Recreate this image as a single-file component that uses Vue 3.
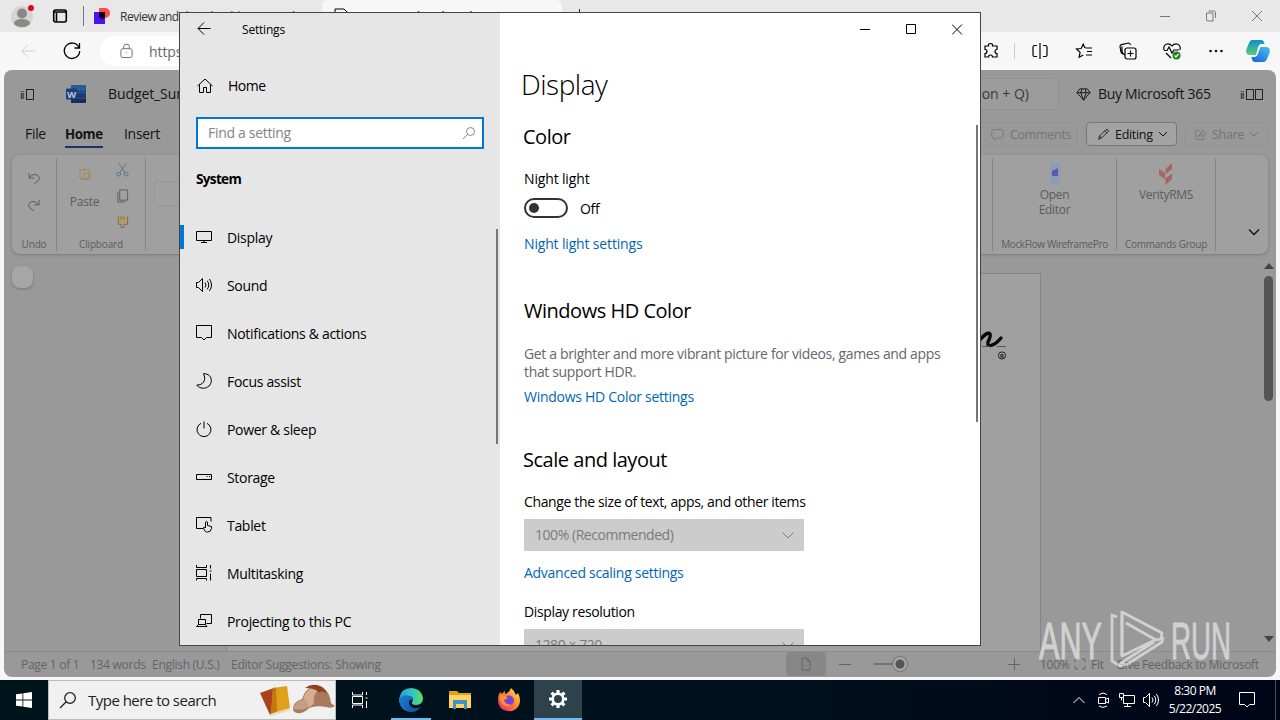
<script setup>
  import { ref } from "vue"

  const search = ref("")
  const nightLight = ref(false)
  const selected = ref("Display")

  const navItems = [
    { name: "Display", icon: "M.5 2.5h15v9H.5zM8 11.5v2M5 13.5h6" },
    {
      name: "Sound",
      icon: "M.5 5.5h2l4-4v13l-4-4h-2zM9 5.5q2 2.5 0 5M11.2 3.7q3.2 4.3 0 8.6M13.4 2q4.3 6 0 12"
    },
    { name: "Notifications & actions", icon: "M.5 .5h15v12h-5l-2.500 2.500-2.500-2.500h-5z" },
    {
      name: "Focus assist",
      icon: "M7.5.7c5-.2 8 3 7.8 7.2-.2 4-3.500 7.300-8 7.300-3 0-5.300-1.200-6.500-3.200 6 .5 10-5 6.700-11.300z"
    },
    { name: "Power & sleep", icon: "M8 .5v7M5 2.300a7 7 0 1 0 6 0" },
    { name: "Storage", icon: "M.5 5.500h15v5h-15zM10.500 7.500h1M13 7.500h1" },
    {
      name: "Tablet",
      icon: "M7 11.500H.5v-11h14.500v4M9.500 11V5q1-1.500 2 0v3.500l4 1v2q-.5 3.500-4 3.500h-1q-2.500-.5-3-4.500 1.500-1 2 .5"
    },
    {
      name: "Multitasking",
      icon: "M.5 0v2.500h10V0M.5 4.500h10v7H.5zM.5 15.500v-2h10v2M14.500 0v3.500M14.500 8.500v7M13.500 6h2"
    },
    { name: "Projecting to this PC", icon: "M4.500 5.500v-4h11v9h-5M2.500 6.500h7v5h-7zM.5 13.500l2-2h7l1.500 2z" }
  ]
</script>

<template>
  <div class="desktop">
    <!-- browser -->
    <div class="browser">
      <div class="tab-strip">
        <svg class="avatar" viewBox="0 0 26 26">
          <circle cx="12" cy="14" r="11" fill="#d6d4d2" />
          <circle cx="12" cy="10.500" r="5" fill="#8b8885" />
          <ellipse cx="12" cy="20" rx="8" ry="4" fill="#8b8885" />
          <circle cx="21" cy="5" r="3" fill="#d90b1c" />
        </svg>
        <svg class="workspaces" viewBox="0 0 16 16">
          <rect x="1.700" y="2" width="12.600" height="12" rx="2" />
          <path d="M2 4h12M4.500 5v9" />
        </svg>
        <span class="strip-line"></span>
        <svg class="favicon" viewBox="0 0 16 16">
          <path d="M5 0h6a5 5 0 0 1 0 10H5z" fill="#ff4b55" />
          <path d="M0 4h11v12H0z" fill="#4b12f5" />
          <path d="M5 4h6v5q-1 2-4 1.500l-2-2z" fill="#090014" />
        </svg>
        <span class="tab-title first">Review and download | MySigned</span>
        <div class="active-tab">
          <svg viewBox="0 0 16 16"><path d="M2 1h9l3 3v11H2z" /></svg>
          <span>Support Ticket Shared - M</span>
        </div>
        <span class="plus-mark"></span>
        <div class="browser-controls">
          <svg viewBox="0 0 12 12"><path d="M1 6.500h10" /></svg>
          <svg viewBox="0 0 12 12">
            <path d="M3.500 1h5q2 0 2 2v5M1.500 3h6.500v8H3q-1.500 0-1.500-1.500z" />
          </svg>
          <svg viewBox="0 0 12 12"><path d="M1 1l10 10M11 1L1 11" /></svg>
        </div>
      </div>
      <div class="address-row">
        <svg class="back" viewBox="0 0 18 18"><path d="M17 9H2M9 2L2 9l7 7" /></svg>
        <svg class="reload" viewBox="0 0 18 18">
          <path d="M16 5.500A7.700 7.700 0 1 0 16.700 9M16.500 1v5h-5" />
        </svg>
        <div class="address">
          <svg viewBox="0 0 14 16">
            <rect x="1" y="5.500" width="12" height="9.500" rx="2" />
            <path d="M4 5V3q0-2.300 3-2.300T10 3v2M6.500 10h1" />
          </svg>
          <span>https://onedrive.live.com</span>
        </div>
        <div class="tools">
          <svg viewBox="0 0 18 18">
            <path d="M2 4h3.500Q5 1.500 7.500 1.500T9.500 4H14v3.500q-2 0-2 2t2 2V15H9.500q0-2-2-2t-2 2H2v-3.500q2 0 2-2t-2-2z" transform="translate(1 0)" />
          </svg>
          <i></i>
          <svg viewBox="0 0 18 18">
            <path d="M6 3.500H3.500q-1.500 0-1.500 1.500v8q0 1.500 1.500 1.500H6M9 1v16M12 3.500h2.500Q16 3.500 16 5v8q0 1.500-1.500 1.500H12" />
          </svg>
          <svg viewBox="0 0 18 18">
            <path d="M10.500 6H17M12 9.500h5M11 13h6M10 6L8.200 2.200 6.200 6.500 1.500 7l3.600 3.400-1 4.800L8.300 13" />
          </svg>
          <svg viewBox="0 0 18 18">
            <rect x="6" y="6" width="11" height="11" rx="2" />
            <path d="M11.500 8.500v6M8.500 11.500h6M4 12q-1.500-.5-2-2L1 4.500Q1 3 2.500 2.700L9.500 1q1.700 0 2 2M3 4.500V9q0 3 3 4" />
          </svg>
          <svg viewBox="0 0 18 18">
            <path d="M1 8Q0 3 4 2q3-.5 5 2 2-2.500 5-2 4 1 3 6M1 8.500h3l2-3.500 3 6 2-3h5M3 11l5 5" />
            <circle cx="13.500" cy="13.500" r="4" fill="#1b841b" />
            <path d="M11.500 13.500l1.500 1.500 2.500-3" stroke="#fff" />
          </svg>
          <svg class="dots" viewBox="0 0 18 18">
            <circle cx="3.500" cy="9" r="1.300" />
            <circle cx="9" cy="9" r="1.300" />
            <circle cx="14.500" cy="9" r="1.300" />
          </svg>
          <svg class="copilot" viewBox="0 0 26 26">
            <defs>
              <linearGradient id="copilotLeft" x1="0" y1="0" x2="0" y2="1">
                <stop offset="0" stop-color="#1489d8" />
                <stop offset="1" stop-color="#5bd06b" />
              </linearGradient>
              <linearGradient id="copilotRight" x1="1" y1="0" x2="0" y2="1">
                <stop offset="0" stop-color="#43c6ed" />
                <stop offset="1" stop-color="#165ce8" />
              </linearGradient>
            </defs>
            <path d="M7 2h9q3 0 3.500 4h-3q-2.500 0-3.300 3L11 17H4q-4-1-2.500-6L4 5q1-3 3-3z" fill="url(#copilotLeft)" />
            <path d="M19 24h-9q-3 0-3.500-5h3q2.500 0 3.300-3L15.500 9H22q4 1 2.500 6L22 21q-1 3-3 3z" fill="url(#copilotRight)" />
          </svg>
        </div>
      </div>

      <!-- Word online, dimmed -->
      <div class="word">
        <div class="word-header">
          <span class="glyphs left">ii<b></b></span>
          <svg class="word-logo" viewBox="0 0 20 18">
            <path d="M5 0h14q1 0 1 1v3.500H5z" fill="#285b91" />
            <path d="M5 4.500h15V9H5z" fill="#1e4b87" />
            <path d="M5 9h15v4.500H5z" fill="#183b73" />
            <path d="M5 13.500h15V17q0 1-1 1H5z" fill="#132d5d" />
            <rect y="3.500" width="11" height="11" rx="1" fill="#183f80" />
            <text x="1" y="12.500" font-size="9.500" font-weight="700" fill="#bcc5d2">W</text>
          </svg>
          <span class="doc-name">Budget_Summary</span>
          <div class="word-search">Search (Option + Q)</div>
          <svg class="gem" viewBox="0 0 16 16">
            <path d="M4 2h8l3 4-7 8-7-8zM1 6h14M5 6l3 8 3-8-1.500-4M5 6l1.500-4" />
          </svg>
          <span class="buy">Buy Microsoft 365</span>
          <span class="glyphs">ii<b></b><b></b></span>
        </div>
        <div class="word-tabs">
          <span class="file">File</span>
          <span class="home">Home</span>
          <span>Insert</span>
          <div class="word-actions">
            <span class="faint comments">
              <svg viewBox="0 0 16 16"><path d="M3 2h10q2 0 2 2v6q0 2-2 2H8l-4 3v-3H3q-2 0-2-2V4q0-2 2-2z" /></svg>
              Comments
            </span>
            <span class="editing">
              <svg viewBox="0 0 16 16"><path d="M2 14l1-4 8-8q3-1 3 2l-8 8zM9.500 3.500l3 3M3 10l3 2" /></svg>
              Editing
              <svg class="chev" viewBox="0 0 10 10"><path d="M1 3l4 4 4-4" /></svg>
            </span>
            <span class="faint share">
              <svg viewBox="0 0 16 16"><path d="M7 3H4Q2 3 2 5v7q0 2 2 2h7q2 0 2-2M5 11q1-5 5-5V3l5 4-5 4V8q-3 0-5 3z" /></svg>
              Share
              <svg class="chev" viewBox="0 0 10 10"><path d="M1 3l4 4 4-4" /></svg>
            </span>
          </div>
        </div>
        <div class="ribbon">
          <div class="group undo">
            <svg viewBox="0 0 14 14"><path d="M2 2v5h5M2 7q4-5 8-3t1 6l-4 3" /></svg>
            <svg viewBox="0 0 14 14"><path d="M12 2v5H7M12 7Q8 2 4 4t-1 6l4 3" /></svg>
            <label>Undo</label>
          </div>
          <div class="group clipboard">
            <div class="clip-body">
              <div class="paste">
                <svg viewBox="0 0 12 14"><path d="M1 2h9v9H1zM4 1h3M5 5h6v6H5z" stroke="#a78650" /></svg>
                <span>Paste</span>
              </div>
              <div class="clip-icons">
                <svg viewBox="0 0 14 16">
                  <path d="M3 1l7 10M11 1L4 11" stroke="#686868" />
                  <circle cx="3" cy="12.500" r="2" stroke="#52718b" />
                  <circle cx="11" cy="12.500" r="2" stroke="#52718b" />
                </svg>
                <svg viewBox="0 0 14 16"><path d="M4 1.500h8.500v11H4zM2 4v10.500h8" /></svg>
                <svg viewBox="0 0 14 16">
                  <path d="M2.500 2h10v7h-10z" fill="#b89a68" />
                  <path d="M2.500 2v8.500h3V14h3v-3.500h4V2M5.500 2v3M8.500 2v3" stroke="#7d6848" />
                </svg>
              </div>
            </div>
            <label>Clipboard</label>
          </div>
          <div class="font-box"></div>
          <div class="group mock">
            <svg class="mock-icon" viewBox="0 0 12 22">
              <rect x="1" width="10" height="22" rx="2" fill="#8c9bbb" />
              <path d="M3 8l6-3v8H3z" fill="#545fa1" />
            </svg>
            <p>Open<br />Editor</p>
            <label>MockFlow WireframePro</label>
          </div>
          <div class="group verity">
            <svg class="verity-icon" viewBox="0 0 14 22">
              <path d="M0 6l6 4v6l-6-4zM6.500 6L13 0v6l-6.500 5zM6.500 15L13 11v5l-6.500 6z" fill="#a66561" />
            </svg>
            <p>VerityRMS</p>
            <label>Commands Group</label>
          </div>
          <svg class="expand" viewBox="0 0 12 12"><path d="M1 3.500l5 5 5-5" /></svg>
        </div>
        <div class="document">
          <div class="bubble"></div>
          <div class="paper">
            <svg viewBox="0 0 60 40">
              <path class="ink" d="M-4 11Q5 0 8 3q1 2-2 8-1 5 4 3 4-1 9-7" />
              <path d="M0 15.500h8M15 15.500h9" stroke="#555" />
              <circle cx="20" cy="24.500" r="3.600" stroke="#222" fill="none" />
              <text x="18" y="26.800" font-size="6" font-weight="700">R</text>
            </svg>
          </div>
          <div class="scrollbar">
            <svg viewBox="0 0 10 8"><path d="M0 7l5-6 5 6z" /></svg>
            <i></i>
            <svg class="down" viewBox="0 0 10 8"><path d="M0 1l5 6 5-6z" /></svg>
          </div>
        </div>
        <div class="status">
          <span class="page-no">Page 1 of 1</span>
          <span class="words">134 words</span>
          <span class="lang">English (U.S.)</span>
          <span class="editor">Editor Suggestions: Showing</span>
          <span class="view"><svg viewBox="0 0 12 14"><path d="M2 1h5l3 3v9H2zM7 1v3h3" /></svg></span>
          <svg class="minus" viewBox="0 0 12 12"><path d="M0 6.500h12" /></svg>
          <svg class="slider" viewBox="0 0 36 16">
            <path d="M0 8h18" stroke-width="1.500" />
            <circle cx="26" cy="8" r="8" fill="#777777" />
            <circle cx="26" cy="8" r="7" fill="#a6a6a6" />
            <circle cx="26" cy="8" r="4.500" fill="#555555" />
          </svg>
          <svg class="plus" viewBox="0 0 12 12"><path d="M0 6.500h12M6.500 0v12" /></svg>
          <span class="percent">100%</span>
          <svg class="fit" viewBox="0 0 12 12"><path d="M1 4V1h3M8 1h3v3M11 8v3H8M4 11H1V8" /></svg>
          <span class="fit-text">Fit</span>
          <span class="feedback">Give Feedback to Microsoft</span>
        </div>
      </div>
    </div>

    <!-- watermark -->
    <svg class="watermark" viewBox="0 0 200 64">
      <text x="3" y="53" textLength="63" lengthAdjust="spacingAndGlyphs">ANY</text>
      <text x="135" y="53" textLength="60" lengthAdjust="spacingAndGlyphs">RUN</text>
      <path d="M81 11l-5-2v46l8 5 5-2M86 50V6l40 21-1 6-5 1-30-17" />
      <path d="M86 6v44l35-17M90 59l36-23 1-5M90 59l-5-2 33-21" />
    </svg>

    <!-- settings window -->
    <div class="settings">
      <aside>
        <div class="title-row">
          <svg viewBox="0 0 14 14"><path d="M13.500 6.500H1M7 .5l-6 6 6 6" /></svg>
          <span>Settings</span>
        </div>
        <div class="nav-home">
          <svg viewBox="0 0 16 16"><path d="M.5 8L8 1l7.500 7M2.500 6.500v8h4v-5h3v5h4v-8" /></svg>
          <span>Home</span>
        </div>
        <div class="find">
          <input v-model="search" placeholder="Find a setting" />
          <svg viewBox="0 0 14 14"><circle cx="8.500" cy="5.500" r="4" /><path d="M5.500 8.500L1 13" /></svg>
        </div>
        <h3>System</h3>
        <nav>
          <div
            v-for="item in navItems"
            :key="item.name"
            class="nav-item"
            :class="{ active: selected === item.name }"
            @click="selected = item.name"
          >
            <svg viewBox="0 0 16 16"><path :d="item.icon" /></svg>
            <span>{{ item.name }}</span>
          </div>
        </nav>
        <div class="nav-thumb"></div>
      </aside>
      <main>
        <div class="window-controls">
          <svg viewBox="0 0 11 11"><path d="M0 5.500h10" /></svg>
          <svg viewBox="0 0 11 11"><path d="M.5.5h9v9H.5z" /></svg>
          <svg viewBox="0 0 11 11"><path d="M0 .5l10 10M10 .5l-10 10" /></svg>
        </div>
        <h1>Display</h1>
        <h2>Color</h2>
        <p class="label">Night light</p>
        <div class="toggle-row">
          <button class="toggle" :class="{ on: nightLight }" @click="nightLight = !nightLight"><i></i></button>
          <span>{{ nightLight ? "On" : "Off" }}</span>
        </div>
        <a class="night-link">Night light settings</a>
        <h2 class="hd">Windows HD Color</h2>
        <p class="hint">Get a brighter and more vibrant picture for videos, games and apps<br />that support HDR.</p>
        <a class="hd-link">Windows HD Color settings</a>
        <h2 class="scale">Scale and layout</h2>
        <p class="label size-label">Change the size of text, apps, and other items</p>
        <div class="select">
          <span>100% (Recommended)</span>
          <svg viewBox="0 0 12 12"><path d="M.5 3.500L6 9l5.500-5.500" /></svg>
        </div>
        <a class="adv-link">Advanced scaling settings</a>
        <p class="label res-label">Display resolution</p>
        <div class="select">
          <span>1280 × 720</span>
          <svg viewBox="0 0 12 12"><path d="M.5 3.500L6 9l5.500-5.500" /></svg>
        </div>
        <div class="main-thumb"></div>
      </main>
    </div>

    <!-- taskbar -->
    <div class="taskbar">
      <div class="start">
        <svg viewBox="0 0 16 16"><path d="M0 2.300l6.500-.9v6.200H0zM7.300 1.300L16 0v7.600H7.300zM0 8.400h6.500v6.200L0 13.700zM7.300 8.400H16V16l-8.700-1.300z" /></svg>
      </div>
      <div class="task-search">
        <svg class="glass" viewBox="0 0 18 18"><circle cx="11" cy="7" r="5.300" /><path d="M7.200 10.800L1 17" /></svg>
        <span>Type here to search</span>
        <svg class="art" viewBox="0 0 76 34">
          <path d="M1 10l14-5 7 21-11 6z" fill="#a8431c" />
          <path d="M14 5l14-2 3 22-19 6z" fill="#e0a01c" />
          <path d="M14 5l3-.5 1 24-6 2.500z" fill="#c67711" />
          <path d="M11 31l20-6v2.500L12 33z" fill="#ead8b4" />
          <path d="M34 26q0-7 9-10 3-9 9-12 5-3 11 0 8 5 9 16l4 3q-3 3-9 1-12-2-18 2-5 5-11 4-4-1-4-4z" fill="#a87a5e" />
          <path d="M44 16q3-9 10-12l5 4q-5 2-4 12l-5 5q-2-7-6-9z" fill="#d5ad90" />
          <path d="M46 5q8-6 17-1 3 2 5 7-5-5-8-1-3-5-14-5z" fill="#8b421f" />
          <path d="M34 26q2-7 9-9 7 0 7 7-6 4-16 2z" fill="#c89e82" />
        </svg>
      </div>
      <div class="task">
        <svg class="tview" viewBox="0 0 18 18"><path d="M1.500 1v3h10V1M1.500 5.500h10v7h-10zM1.500 17v-3h10v3M15.500 1v3M15.500 10v7M14.500 7h2" /></svg>
      </div>
      <div class="task running">
        <svg class="edge" viewBox="0 0 24 24">
          <defs>
            <linearGradient id="edgeTop" x1="0" y1="0" x2="1" y2="0">
              <stop offset="0" stop-color="#289fe0" />
              <stop offset=".6" stop-color="#32c9b7" />
              <stop offset="1" stop-color="#66dd61" />
            </linearGradient>
            <linearGradient id="edgeLow" x1="0" y1="0" x2="1" y2="1">
              <stop offset="0" stop-color="#1580d2" />
              <stop offset="1" stop-color="#134e9c" />
            </linearGradient>
          </defs>
          <path d="M0 11Q2 0 12 0q10 0 12 10 0 7-7 7-5 0-4-3Q16 9 10 8 4 7 0 14z" fill="url(#edgeTop)" />
          <path d="M0 12Q3 6 9 7.500q5 1 5 4.500-4-1-4 3 1 6 8 5 3 0 4-2-3 6-10 6Q2 23 0 12z" fill="url(#edgeLow)" />
          <path d="M8 8q-4 2-3.500 8T13 24Q2 24 0 13q2-5 8-5z" fill="#1b74cb" />
        </svg>
      </div>
      <div class="task">
        <svg class="folder" viewBox="0 0 22 20">
          <path d="M0 1h8l2 2h12v4H0z" fill="#dfa01e" />
          <path d="M0 5h22v13H0z" fill="#ffd45f" />
          <path d="M4 10h14v9h-3v-5H7v5H4z" fill="#3d92cf" />
        </svg>
      </div>
      <div class="task">
        <svg class="fox" viewBox="0 0 24 24">
          <defs>
            <linearGradient id="foxBody" x1="1" y1="0" x2="0" y2="1">
              <stop offset="0" stop-color="#fff25a" />
              <stop offset=".45" stop-color="#ff8b25" />
              <stop offset="1" stop-color="#ef197b" />
            </linearGradient>
          </defs>
          <path d="M3 4l2 2q1-2 3-3v3q4-1 6-6 4 3 5 7l2-2q4 8 0 14-4 5-10 4Q1 22 1 12q0-5 2-8z" fill="url(#foxBody)" />
          <circle cx="12" cy="12.500" r="5" fill="#7a3fd8" />
          <path d="M3 7q5 0 8 3l-4 2q1 5 7 4-4 5-9 0-3-4-2-9z" fill="#ff9233" />
        </svg>
      </div>
      <div class="task current">
        <svg class="gear" viewBox="0 0 20 20">
          <circle cx="10" cy="10" r="5.300" stroke-width="2.600" />
          <path d="M10 1v3M10 16v3M1 10h3M16 10h3M3.600 3.600l2.200 2.200M14.200 14.200l2.200 2.200M16.400 3.600l-2.200 2.200M5.800 14.200l-2.200 2.200" stroke-width="3.200" />
        </svg>
      </div>
      <div class="tray">
        <svg viewBox="0 0 16 16"><path d="M2.500 11L8 5.500l5.500 5.500" /></svg>
        <svg viewBox="0 0 16 16"><path d="M3.500 5.500h7v6h-7zM10.500 7.500l3-1.500v5l-3-1.500M4 2.500Q8-.5 12 2.500M4 14q4 3 8 0" /></svg>
        <svg viewBox="0 0 16 16"><path d="M5 3.500h10.500v8H4.500V6M.5 1.500h4v4h-4zM2.500 5.500v3M8.500 11.500v3M5 14.500h7" /></svg>
        <svg viewBox="0 0 16 16"><path :d="navItems[1].icon" /></svg>
      </div>
      <div class="clock"><span>8:30 PM</span><span>5/22/2025</span></div>
      <svg class="notice" viewBox="0 0 16 16"><path :d="navItems[2].icon" /></svg>
      <i class="peek"></i>
    </div>
  </div>
</template>

<style>
  body {
    margin: 0;
    overflow: hidden;
  }
</style>

<style scoped>
  .desktop {
    position: relative;
    width: 1280px;
    height: 720px;
    overflow: hidden;
    font-family: "Open Sans", "Noto Sans", sans-serif;
    font-size: 14px;
    letter-spacing: -0.31px;
    color: #000;
  }

  * {
    box-sizing: border-box;
  }

  svg {
    display: block;
    flex: none;
    fill: none;
    stroke: currentColor;
  }

  svg text {
    stroke: none;
    fill: currentColor;
  }

  .word-logo text {
    fill: #bcc5d2;
  }

  svg [fill^="#"],
  svg [fill^="url"] {
    stroke: none;
  }

  h1,
  h2,
  h3,
  p {
    margin: 0;
    font-weight: 400;
  }

  /* browser */
  .browser {
    height: 680px;
    display: flex;
    flex-direction: column;
    background: #f7f7f7;
  }

  .tab-strip {
    height: 32px;
    flex: none;
    display: flex;
    align-items: center;
    background: #e8e8e8;
    font-size: 12px;
    letter-spacing: -0.5px;
  }

  .avatar {
    width: 26px;
    height: 26px;
    margin-left: 10px;
  }

  .workspaces {
    width: 16px;
    height: 16px;
    margin-left: 16px;
    stroke-width: 1.6;
  }

  .strip-line {
    width: 1px;
    height: 20px;
    margin-left: 15px;
    background: #777;
  }

  .favicon {
    width: 16px;
    height: 16px;
    margin-left: 10px;
  }

  .tab-title.first {
    width: 202px;
    margin-left: 10px;
    white-space: nowrap;
    color: #333;
  }

  .active-tab {
    width: 240px;
    height: 32px;
    display: flex;
    align-items: center;
    gap: 10px;
    padding-left: 11px;
    background: #f7f7f7;
    border-radius: 6px 6px 0 0;
  }

  .active-tab svg {
    width: 16px;
    height: 16px;
  }

  .plus-mark {
    width: 1px;
    height: 14px;
    margin-left: 17px;
    background: #222;
  }

  .browser-controls {
    display: flex;
    gap: 34px;
    margin-left: auto;
    padding-right: 17px;
    color: #777;
  }

  .browser-controls svg {
    width: 12px;
    height: 12px;
  }

  .address-row {
    height: 38px;
    flex: none;
    display: flex;
    align-items: center;
  }

  .back {
    width: 18px;
    height: 16px;
    margin-left: 19px;
    color: #ccc;
  }

  .reload {
    width: 18px;
    height: 18px;
    margin-left: 26px;
    stroke-width: 1.3;
  }

  .address {
    width: 860px;
    height: 30px;
    display: flex;
    align-items: center;
    gap: 16px;
    margin-left: 19px;
    padding-left: 20px;
    border-radius: 15px;
    background: #fff;
    color: #666;
    letter-spacing: -0.1px;
  }

  .address svg {
    width: 13px;
    height: 16px;
  }

  .tools {
    display: flex;
    align-items: center;
    margin-left: 22px;
  }

  .tools svg {
    width: 18px;
    height: 18px;
    margin-right: 26px;
    stroke-width: 1.2;
  }

  .tools svg:first-child {
    margin-right: 14px;
  }

  .tools i {
    width: 1px;
    height: 16px;
    margin-right: 16px;
    background: #ccc;
  }

  .tools .dots {
    margin-right: 20px;
    fill: #111;
    stroke: none;
  }

  .tools .copilot {
    width: 26px;
    height: 26px;
    margin: 0;
  }

  /* word */
  .word {
    width: 1272px;
    height: 607px;
    display: flex;
    flex-direction: column;
    margin-left: 4px;
    overflow: hidden;
    border-radius: 8px;
    background: #999;
    color: #141414;
  }

  .word-header {
    height: 48px;
    flex: none;
    display: flex;
    align-items: center;
  }

  .glyphs {
    display: flex;
    align-items: center;
    gap: 1px;
    font-size: 11px;
    letter-spacing: -1px;
    margin-left: 29px;
  }

  .glyphs.left {
    width: 14px;
    margin-left: 16px;
  }

  .glyphs b {
    width: 8px;
    height: 11px;
    flex: none;
    border: 1px solid #222;
  }

  .glyphs b:first-of-type {
    margin-left: 1px;
  }

  .word-logo {
    width: 20px;
    height: 18px;
    margin-left: 32px;
  }

  .doc-name {
    width: 126px;
    margin-left: 22px;
    padding-bottom: 1px;
    letter-spacing: -0.1px;
  }

  .word-search {
    width: 823px;
    height: 32px;
    padding: 5px 29px;
    margin-left: 2px;
    border: 1px solid #919191;
    border-radius: 4px;
    background: #9c9c9c;
    color: #3a3a3a;
    text-align: right;
    letter-spacing: 0;
  }

  .gem {
    width: 15px;
    height: 15px;
    margin-left: 17px;
  }

  .buy {
    width: 113px;
    margin-left: 7px;
    padding-bottom: 1px;
    letter-spacing: -0.3px;
    white-space: nowrap;
  }

  .word-tabs {
    height: 37px;
    flex: none;
    display: flex;
    align-items: flex-start;
    padding: 0 8px 0 21px;
  }

  .word-tabs > span {
    height: 30px;
    line-height: 32px;
  }

  .word-tabs .file {
    width: 21px;
    margin-right: 19px;
  }

  .word-tabs .home {
    width: 38px;
    margin-right: 21px;
    font-weight: 700;
    font-size: 13.3px;
    letter-spacing: -0.4px;
    border-bottom: 2px solid #18356b;
  }

  .word-actions {
    display: flex;
    gap: 8px;
    margin: 4px 0 0 auto;
    font-size: 12.5px;
    letter-spacing: -0.3px;
  }

  .word-actions span {
    height: 24px;
    display: flex;
    align-items: center;
    gap: 6px;
    border: 1px solid #8f8f8f;
    border-radius: 4px;
  }

  .word-actions .faint {
    color: #747474;
    border-color: #929292;
  }

  .word-actions .comments {
    width: 100px;
    padding-left: 12px;
  }

  .word-actions .editing {
    width: 91px;
    gap: 5px;
    padding-left: 10px;
    border-color: #777;
    background: #a3a3a3;
    color: #111;
  }

  .word-actions .share {
    width: 83px;
    gap: 5px;
    padding-left: 8px;
  }

  .word-actions svg {
    width: 13px;
    height: 13px;
  }

  .word-actions .chev {
    width: 10px;
    height: 10px;
  }

  .ribbon {
    height: 99px;
    flex: none;
    display: flex;
    margin: 0 8px;
    border-radius: 8px;
    background: #a0a0a0;
    box-shadow: 0 1px 3px #777;
    color: #5c5c5c;
  }

  .group {
    height: 93px;
    display: flex;
    flex-direction: column;
    align-items: center;
    margin-top: 3px;
    border-right: 1px solid #858585;
  }

  .group label {
    margin: auto 0 1px;
    font-size: 10px;
    line-height: 12px;
    letter-spacing: -0.38px;
    white-space: nowrap;
  }

  .undo {
    width: 45px;
  }

  .undo label,
  .clipboard label {
    letter-spacing: -0.15px;
  }

  .verity label {
    letter-spacing: -0.26px;
  }

  .undo svg {
    width: 14px;
    height: 14px;
    margin-top: 13px;
  }

  .clipboard {
    width: 89px;
  }

  .clip-body {
    display: flex;
    gap: 17px;
    margin-left: -3px;
  }

  .paste {
    display: flex;
    flex-direction: column;
    align-items: center;
    gap: 11px;
    padding-top: 10px;
    font-size: 12px;
    letter-spacing: -0.2px;
  }

  .paste svg {
    width: 12px;
    height: 14px;
  }

  .clip-icons {
    display: flex;
    flex-direction: column;
    gap: 10px;
    padding-top: 4px;
  }

  .clip-icons svg {
    width: 13px;
    height: 16px;
  }

  .font-box {
    width: 30px;
    height: 25px;
    margin: 26px 808px 0 8px;
    border: 1px solid #979797;
    border-radius: 4px;
  }

  .group p {
    font-size: 12px;
    line-height: 15px;
    letter-spacing: -0.3px;
    text-align: center;
  }

  .mock {
    width: 125px;
    border-left: 1px solid #858585;
  }

  .verity {
    width: 99px;
  }

  .mock-icon,
  .verity-icon {
    width: 12px;
    height: 22px;
    margin: 5px 0 2px;
  }

  .verity-icon {
    width: 14px;
  }

  .expand {
    width: 12px;
    height: 12px;
    margin: 71px 0 0 32px;
    color: #111;
    stroke-width: 1.3;
  }

  .document {
    flex: 1;
    display: flex;
    min-height: 0;
  }

  .bubble {
    width: 21px;
    height: 22px;
    margin: 12px 0 0 8px;
    border-radius: 8px;
    background: #a6a6a6;
    box-shadow: 0 1px 3px #777;
  }

  .paper {
    width: 815px;
    margin: 19px auto 0 193px;
    padding: 57px 0 0 755px;
    border: 1px solid #858585;
    border-bottom: 0;
    background: #a0a0a0;
    color: #111;
  }

  .paper svg {
    width: 60px;
    height: 40px;
    overflow: visible;
  }

  .ink {
    stroke: #080808;
    stroke-width: 3.4;
    stroke-linecap: round;
  }

  .scrollbar {
    width: 10px;
    display: flex;
    flex-direction: column;
    margin-right: 2px;
    padding: 8px 0;
  }

  .scrollbar svg {
    width: 10px;
    height: 8px;
    fill: #444;
    stroke: none;
  }

  .scrollbar i {
    width: 9px;
    height: 125px;
    margin-top: 6px;
    border-radius: 5px;
    background: #555;
  }

  .scrollbar .down {
    margin-top: auto;
  }

  .status {
    height: 26px;
    flex: none;
    display: flex;
    align-items: center;
    padding-bottom: 1px;
    border-top: 1px solid #8b8b8b;
    font-size: 12px;
    letter-spacing: -0.28px;
    color: #646464;
    white-space: nowrap;
  }

  .status .page-no {
    width: 69px;
    margin-left: 17px;
  }

  .status .words {
    width: 62px;
  }

  .status .lang {
    width: 79px;
  }

  .status .editor {
    width: 555px;
  }

  .status .view {
    width: 40px;
    height: 24px;
    display: flex;
    align-items: center;
    justify-content: center;
    border-radius: 4px;
    background: #878787;
  }

  .status .view svg {
    width: 12px;
    height: 14px;
  }

  .status .minus,
  .status .plus,
  .status .fit {
    width: 12px;
    height: 12px;
  }

  .status .minus {
    margin-left: 13px;
  }

  .status .slider {
    width: 36px;
    height: 16px;
    margin-left: 23px;
    overflow: visible;
  }

  .status .plus {
    margin-left: 98px;
  }

  .status .percent {
    width: 34px;
    margin-left: 20px;
  }

  .status .fit-text {
    width: 20px;
    margin-left: 5px;
  }

  .status .feedback {
    margin-left: 5px;
    letter-spacing: -0.33px;
  }

  .watermark {
    position: absolute;
    left: 1036px;
    top: 606px;
    width: 200px;
    height: 64px;
    overflow: visible;
    color: #fff;
    opacity: 0.55;
    stroke-width: 2.8;
    stroke-linejoin: round;
    font-family: "Liberation Sans", sans-serif;
    font-size: 52px;
    letter-spacing: 0;
  }

  .watermark text {
    stroke: currentColor;
    stroke-width: 0.9;
  }

  /* settings window */
  .settings {
    position: absolute;
    left: 179px;
    top: 12px;
    width: 802px;
    height: 634px;
    display: flex;
    border: 1px solid #444;
    background: #fff;
    overflow: hidden;
  }

  aside {
    position: relative;
    width: 320px;
    flex: none;
    background: #e6e6e6;
  }

  .title-row {
    height: 33px;
    display: flex;
    align-items: center;
    gap: 31px;
    padding-left: 17px;
    font-size: 12px;
    letter-spacing: -0.2px;
  }

  .title-row svg {
    width: 14px;
    height: 14px;
    margin-top: -1px;
  }

  .nav-home {
    height: 48px;
    display: flex;
    align-items: center;
    gap: 15px;
    margin-top: 16px;
    padding-left: 17px;
    letter-spacing: -0.5px;
  }

  .nav-home svg {
    width: 16px;
    height: 16px;
  }

  .nav-home span,
  .nav-item span {
    padding-bottom: 2px;
  }

  .find {
    width: 288px;
    height: 32px;
    display: flex;
    align-items: center;
    margin: 7px 0 0 16px;
    padding: 0 6px 0 10px;
    border: 2px solid #0078d7;
    background: #fff;
  }

  .find input {
    width: 254px;
    margin-right: auto;
    padding: 0 0 2px;
    border: 0;
    outline: 0;
    font: inherit;
    letter-spacing: inherit;
  }

  .find input::placeholder {
    color: #848484;
  }

  .find svg {
    width: 14px;
    height: 14px;
    color: #888;
  }

  h3 {
    height: 20px;
    margin: 20px 0 0 16px;
    font-size: 13.6px;
    letter-spacing: -0.7px;
    line-height: 20px;
    font-weight: 700;
  }

  nav {
    height: 431px;
    margin-top: 25px;
  }

  .nav-item {
    height: 48px;
    display: flex;
    align-items: center;
    gap: 15px;
    padding-left: 16px;
  }

  .nav-item svg {
    width: 16px;
    height: 16px;
    margin-top: -2px;
  }

  .nav-item.active {
    padding-left: 0;
  }

  .nav-item.active::before {
    content: "";
    width: 4px;
    height: 24px;
    margin: -2px -3px 0 0;
    background: #0078d7;
  }

  .nav-thumb {
    position: absolute;
    left: 316px;
    top: 216px;
    width: 2px;
    height: 215px;
    background: #777;
  }

  main {
    position: relative;
    flex: 1;
    padding-left: 24px;
  }

  .window-controls {
    height: 33px;
    display: flex;
    align-items: center;
    justify-content: flex-end;
    gap: 35px;
    padding-right: 17px;
  }

  .window-controls svg {
    width: 11px;
    height: 11px;
  }

  h1 {
    height: 36px;
    margin: 20px 0 0 -3px;
    font-size: 28px;
    font-weight: 300;
    line-height: 36px;
    letter-spacing: -0.5px;
  }

  h2 {
    height: 28px;
    margin: 21px 0 0 -1px;
    font-size: 20px;
    line-height: 28px;
    letter-spacing: -0.48px;
  }

  p.label {
    height: 20px;
    margin-top: 18px;
    line-height: 20px;
    letter-spacing: -0.15px;
  }

  .toggle-row {
    height: 20px;
    display: flex;
    align-items: center;
    gap: 12px;
    margin-top: 9px;
  }

  .toggle-row span {
    padding-top: 1px;
  }

  .toggle {
    width: 44px;
    height: 20px;
    display: flex;
    align-items: center;
    padding: 0 3px;
    border: 2px solid #333;
    border-radius: 10px;
    background: #fff;
  }

  .toggle i {
    width: 10px;
    height: 10px;
    border-radius: 50%;
    background: #333;
  }

  .toggle.on {
    justify-content: flex-end;
  }

  a {
    display: block;
    height: 20px;
    line-height: 20px;
    letter-spacing: -0.28px;
    color: #0066b4;
  }

  .night-link {
    margin-top: 16px;
    letter-spacing: -0.16px;
  }

  h2.hd {
    margin: 43px 0 0;
  }

  .hint {
    margin-top: 20px;
    line-height: 18px;
    letter-spacing: -0.35px;
    color: #666;
    white-space: nowrap;
  }

  .hd-link {
    margin-top: 6px;
  }

  h2.scale {
    margin-top: 39px;
  }

  p.size-label,
  p.res-label {
    letter-spacing: -0.36px;
  }

  .select {
    width: 280px;
    height: 32px;
    display: flex;
    align-items: center;
    justify-content: space-between;
    margin-top: 7px;
    padding: 0 10px 0 11px;
    background: #ccc;
    color: #7a7a7a;
    letter-spacing: -0.45px;
  }

  .select span {
    padding-bottom: 1px;
  }

  .select svg {
    width: 12px;
    height: 12px;
  }

  .adv-link {
    margin-top: 12px;
  }

  p.res-label {
    margin-top: 19px;
  }

  .main-thumb {
    position: absolute;
    right: 2px;
    top: 112px;
    width: 2px;
    height: 297px;
    background: #777;
  }

  /* taskbar */
  .taskbar {
    height: 40px;
    display: flex;
    align-items: center;
    background: linear-gradient(90deg, #00141c, #00101d 60%, #000417);
    color: #fff;
  }

  .start {
    width: 48px;
    display: flex;
    justify-content: center;
  }

  .start svg {
    width: 16px;
    height: 16px;
    fill: #fff;
    stroke: none;
  }

  .task-search {
    width: 288px;
    height: 40px;
    display: flex;
    align-items: center;
    padding-left: 10px;
    border: 1px solid #bbb;
    background: #f0f0f0;
    color: #222;
    font-size: 15px;
    letter-spacing: -0.52px;
  }

  .task-search span {
    width: 171px;
    margin-left: 11px;
    white-space: nowrap;
  }

  .glass {
    width: 18px;
    height: 18px;
    stroke-width: 1.3;
  }

  .art {
    width: 76px;
    height: 34px;
  }

  .task {
    width: 48px;
    height: 40px;
    display: flex;
    align-items: center;
    justify-content: center;
  }

  .running {
    width: 54px;
    background: linear-gradient(#76b9ed, #76b9ed) center bottom / 40px 2px no-repeat;
  }

  .running + .task {
    width: 44px;
  }

  .running + .task + .task {
    width: 52px;
    padding-left: 1px;
  }

  .task.current {
    width: 48px;
    border-bottom: 2px solid #76b9ed;
    background: #2e424b;
  }

  .tview {
    width: 18px;
    height: 18px;
  }

  .edge,
  .fox {
    width: 24px;
    height: 24px;
  }

  .folder {
    width: 22px;
    height: 20px;
  }

  .gear {
    width: 20px;
    height: 20px;
  }

  .tray {
    display: flex;
    gap: 8px;
    margin-left: auto;
  }

  .tray svg {
    width: 16px;
    height: 16px;
  }

  .clock {
    width: 72px;
    display: flex;
    flex-direction: column;
    align-items: center;
    font-size: 12px;
    line-height: 18px;
    letter-spacing: -0.5px;
  }

  .notice {
    width: 16px;
    height: 16px;
    margin-left: 8px;
  }

  .peek {
    width: 1px;
    height: 40px;
    margin: 0 4px 0 20px;
    background: #4b5160;
  }
</style>
